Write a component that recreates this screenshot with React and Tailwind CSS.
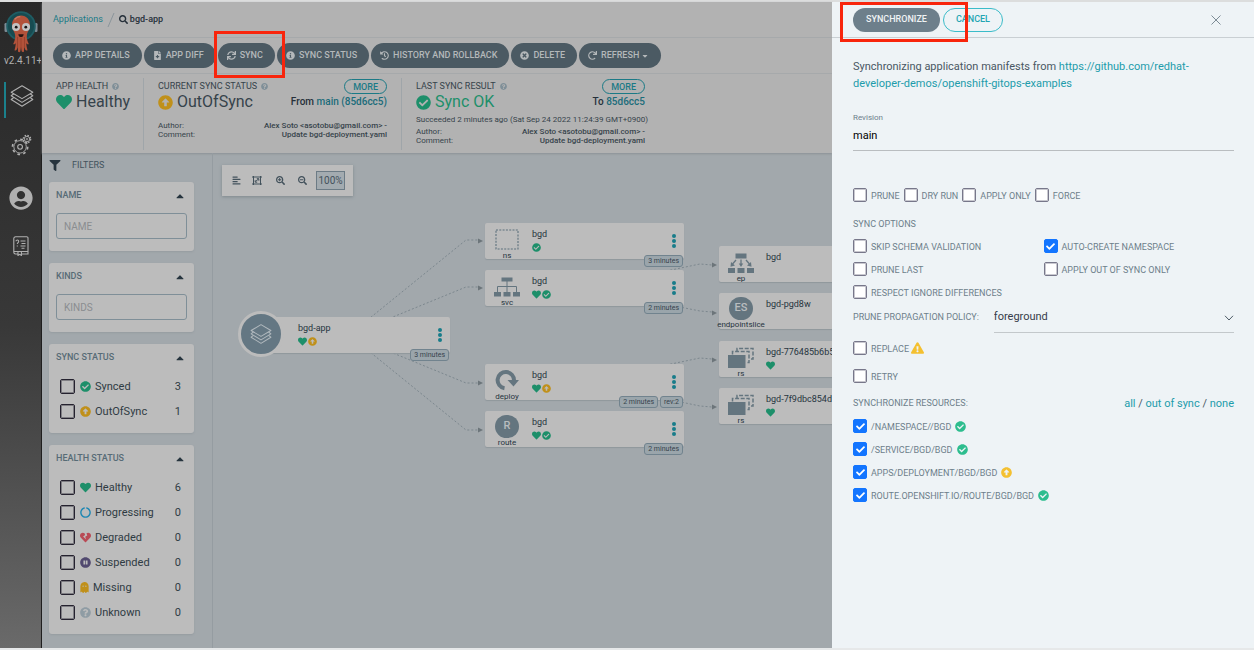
import React from "react";
import {
  FaAlignLeft,
  FaArrowAltCircleUp,
  FaCaretDown,
  FaCaretUp,
  FaCheck,
  FaCheckCircle,
  FaCircleNotch,
  FaExclamationTriangle,
  FaFileMedical,
  FaFilter,
  FaGhost,
  FaHeart,
  FaHeartBroken,
  FaHistory,
  FaInfoCircle,
  FaPauseCircle,
  FaQuestionCircle,
  FaRedo,
  FaSearch,
  FaSearchMinus,
  FaSearchPlus,
  FaSync,
  FaTimesCircle,
  FaUserCircle,
} from "react-icons/fa";

/* ---------- drawings ---------- */

function OctopusLogo() {
  return (
    <svg viewBox="0 0 34 44" className="h-11 w-[34px]" aria-hidden="true">
      <rect x="0.5" y="13" width="3" height="9" rx="1.2" fill="#7d8c96" />
      <rect x="30.5" y="13" width="3" height="9" rx="1.2" fill="#7d8c96" />
      <circle cx="17" cy="16" r="14.8" fill="#1f5d64" />
      <circle cx="17" cy="16" r="13" fill="#174b51" />
      <path
        d="M17 5.5c-5.600 0-9 4.300-9 9.600 0 4.300 2.600 6.600 3.100 9.900.4 3-.2 5.600-1.600 8.300-.6 1.200.6 1.500 1.400.8l.9-.9c-.2 2.300-.6 4.600-1.300 7 .9.600 1.700.3 2.200-.5l1-3 .4 5c1 .8 1.900.5 2.200-.4l.7-4.200.7 4.200c.4.900 1.300 1.100 2.200.4l.4-5 1 3c.5.800 1.300 1.100 2.200.5-.7-2.400-1.100-4.700-1.300-7l.9.9c.8.700 2 .4 1.400-.8-1.400-2.700-2-5.300-1.600-8.300.5-3.300 3.100-5.600 3.100-9.900 0-5.300-3.400-9.600-9-9.600z"
        fill="#b2523a"
      />
      <path d="M13.500 27v10M17 28v11M20.500 27v10" stroke="#943f2b" strokeWidth="0.8" fill="none" />
      <path d="M11 9c1.300-1.600 3-2.300 4.800-2.300" stroke="#c77b68" strokeWidth="1.200" fill="none" strokeLinecap="round" />
      <circle cx="12" cy="17" r="4" fill="#c2c2c2" />
      <circle cx="22" cy="17" r="4" fill="#c2c2c2" />
      <circle cx="12.200" cy="17.200" r="1.400" fill="#1a1414" />
      <circle cx="21.800" cy="17.200" r="1.400" fill="#1a1414" />
      <path d="M14.300 24.200h5.400c-.3 2-1.400 2.900-2.700 2.900s-2.400-.9-2.700-2.900z" fill="#2a1512" />
    </svg>
  );
}

function Layers({ className }) {
  return (
    <svg viewBox="0 0 24 24" className={className} fill="none" stroke="currentColor" strokeWidth="1.100" strokeLinejoin="round" aria-hidden="true">
      <path d="M12 1.800 22.800 8.200 12 14.600 1.200 8.200z" />
      <path d="M3.800 9.800 1.200 11.800 12 18.400l10.800-6.600-2.600-2" />
      <path d="M3.800 13.500 1.200 15.500 12 22.200l10.800-6.700-2.600-2" />
    </svg>
  );
}

function Gears() {
  return (
    <svg viewBox="0 0 24 24" className="h-[22px] w-[22px]" fill="none" stroke="currentColor" aria-hidden="true">
      <circle cx="11" cy="14" r="6.800" strokeWidth="1" />
      <circle cx="11" cy="14" r="8.300" strokeWidth="1.800" strokeDasharray="2.900 3.600" />
      <circle cx="11" cy="14" r="2.600" strokeWidth="1.200" />
      <circle cx="18.500" cy="5.500" r="3" strokeWidth="1" fill="#303030" />
      <circle cx="18.500" cy="5.500" r="4.100" strokeWidth="1.300" strokeDasharray="1.700 1.520" />
      <circle cx="18.500" cy="5.500" r="0.900" strokeWidth="0.800" />
    </svg>
  );
}

function DocsBook() {
  return (
    <svg viewBox="0 0 16 20" className="h-5 w-4" fill="none" stroke="currentColor" strokeWidth="1.100" aria-hidden="true">
      <path d="M5 18H2.500A1.700 1.700 0 0 1 .8 16.300V2.500A1.700 1.700 0 0 1 2.500.8h11.200a1.300 1.300 0 0 1 1.300 1.300V18H8.500" />
      <path d="M1 15.500h14M5 15.500v4l1.700-1.200 1.700 1.200v-4" />
      <path d="M7.500 5h5M8.500 7.500h4M7.500 10h5M8.500 12.200h3" />
      <path d="M3 5.300c0-1.700 2.700-1.600 2.700.1 0 1.200-1.400 1.200-1.400 2.600M4.300 9.500v1" />
    </svg>
  );
}

function Dots({ className }) {
  return (
    <svg viewBox="0 0 4 14" className={className} fill="#187c8a" aria-hidden="true">
      <circle cx="2" cy="2" r="2" />
      <circle cx="2" cy="7" r="2" />
      <circle cx="2" cy="12" r="2" />
    </svg>
  );
}

function KindIcon({ kind }) {
  const c = "h-6 w-[26px] overflow-visible";
  if (kind === "ns")
    return (
      <svg viewBox="0 0 26 24" className={c} aria-hidden="true">
        <rect x="2" y="3" width="22" height="19" fill="none" stroke="#5c707c" strokeWidth="1.100" strokeDasharray="2 1.300" />
      </svg>
    );
  if (kind === "svc")
    return (
      <svg viewBox="0 0 26 24" className={c} fill="#64757f" aria-hidden="true">
        <path d="M7.500 3.500h11v4h-11zM0 18h7v4.500H0zM9.500 18h7v4.500h-7zM19 18h7v4.500h-7z" />
        <path d="M13 7v11M3.500 18v-5.500h19V18" fill="none" stroke="#64757f" />
      </svg>
    );
  if (kind === "ep")
    return (
      <svg viewBox="0 0 26 24" className={c} fill="#64757f" aria-hidden="true">
        <path d="M7.500 3.500h11v5h-11zM0 18h7v5H0zM9.500 18h7v5h-7zM19 18h7v5h-7z" />
        <path d="M13 9.500v5M8 10l-3.500 4M18 10l3.500 4" fill="none" stroke="#64757f" strokeWidth="1.300" />
        <path d="M10.800 13.500h4.400L13 17zM3 12l4 3.500-4.500 1.300zM23 12l-4 3.500 4.500 1.300z" />
      </svg>
    );
  if (kind === "deploy")
    return (
      <svg viewBox="0 0 26 24" className={c} aria-hidden="true">
        <path d="M10.500 20.300A8.200 8.200 0 1 1 20 12.500" fill="none" stroke="#64757f" strokeWidth="4" />
        <path d="M13.500 12H25l-5.500 6.500z" fill="#64757f" />
      </svg>
    );
  if (kind === "rs")
    return (
      <svg viewBox="0 0 26 24" className={c} aria-hidden="true">
        <path d="M9 7V3.500h16V14h-3.500" fill="none" stroke="#64757f" strokeWidth="1.500" strokeDasharray="4 1.600" />
        <path d="M4.500 9.500v-3h16.500v11h-3" fill="none" stroke="#64757f" strokeWidth="1.500" strokeDasharray="4 1.600" />
        <path d="M0 10h17.500v13H0z" fill="#64757f" />
      </svg>
    );
  return (
    <span className="flex h-6 w-6 items-center justify-center rounded-full bg-[#64757f] text-[11px] font-medium text-[#b9bdbf]">
      {kind === "route" ? "R" : "ES"}
    </span>
  );
}

const Heart = ({ className = "" }) => <FaHeart className={`shrink-0 text-[#1d8f6a] ${className}`} />;
const Check = ({ className = "" }) => <FaCheckCircle className={`shrink-0 text-[#1d8f6a] ${className}`} />;
const Up = ({ className = "" }) => <FaArrowAltCircleUp className={`shrink-0 text-[#c0901a] ${className}`} />;

/* ---------- sidebar ---------- */

function Sidebar() {
  return (
    <nav className="flex w-[42px] shrink-0 flex-col items-center border-r border-[#1f1f1f] bg-linear-to-b from-[#282828] via-[#383838] to-[#6a6a6a] pt-2 text-[#b0b0b0]">
      <OctopusLogo />
      <span className="w-full overflow-hidden pl-1 text-[10px] leading-[14px] whitespace-nowrap">v2.4.11+</span>
      <a href="#applications" aria-label="Applications" className="mt-3.5 flex h-9 w-full pl-1">
        <span className="flex flex-1 justify-center border-l-2 border-[#1b818c] pt-0.5 pr-1">
          <Layers className="h-6 w-6" />
        </span>
      </a>
      <a href="#settings" aria-label="Settings" className="mt-4">
        <Gears />
      </a>
      <a href="#user" aria-label="User info" className="mt-[30px]">
        <FaUserCircle className="h-6 w-6" />
      </a>
      <a href="#docs" aria-label="Documentation" className="mt-[26px]">
        <DocsBook />
      </a>
    </nav>
  );
}

/* ---------- header ---------- */

function ToolButton({ icon: Icon, children, caret, outlined }) {
  const button = (
    <button className="flex h-[25px] items-center gap-1 rounded-full bg-[#4b5a63] pr-3 pl-[9px] text-[9px] font-medium whitespace-nowrap text-[#b4b8ba]">
      <Icon className="h-[9px] w-[9px]" />
      <span>{children}</span>
      {caret && <FaCaretDown className="-ml-0.5 h-2 w-2" />}
    </button>
  );
  if (!outlined) return button;
  return (
    <div className="relative z-10">
      {button}
      <span className="pointer-events-none absolute -top-3 -right-2.5 -bottom-2.5 -left-1 border-3 border-[#f8250c]" />
    </div>
  );
}

function StatusTitle({ children, more }) {
  return (
    <div className="flex h-[15px] items-center gap-1 text-[9px] text-[#36434b]">
      <span>{children}</span>
      <FaQuestionCircle className="h-[7px] w-[7px] text-[#7f8f98]" />
      {more && (
        <button className="ml-auto h-[15px] rounded-full border border-[#1b7a86] px-2 text-[9px] leading-3 font-medium text-[#1b7a86]">MORE</button>
      )}
    </div>
  );
}

function Commit() {
  return (
    <dl className="grid grid-cols-[auto_1fr] text-[8px] leading-[9px] text-[#36434b]">
      <dt>Author:</dt>
      <dd className="text-right font-medium">Alex Soto &lt;asotobu@gmail.com&gt; -</dd>
      <dt>Comment:</dt>
      <dd className="text-right font-medium">Update bgd-deployment.yaml</dd>
    </dl>
  );
}

function Header() {
  return (
    <header className="overflow-hidden bg-[#b2b2b2] whitespace-nowrap shadow-[0_1px_2px_#8b9296]">
      <div className="flex h-9 items-center border-b border-[#a6a9ab] pl-[11px] text-[9px]">
        <a href="#applications" className="text-[#1b7a86]">Applications</a>
        <svg viewBox="0 0 8 16" className="mx-1 h-4 w-2" stroke="#8b959b" aria-hidden="true">
          <path d="M7 1 1 15" />
        </svg>
        <FaSearch className="mr-0.5 h-[9px] w-[9px] text-[#26303a]" />
        <span className="font-medium text-[#26303a]">bgd-app</span>
      </div>
      <div className="flex h-9 items-center gap-0.5 border-b border-[#a6a9ab] pl-[11px]">
        <ToolButton icon={FaInfoCircle}>APP DETAILS</ToolButton>
        <ToolButton icon={FaFileMedical}>APP DIFF</ToolButton>
        <ToolButton icon={FaSync} outlined>SYNC</ToolButton>
        <ToolButton icon={FaInfoCircle}>SYNC STATUS</ToolButton>
        <ToolButton icon={FaHistory}>HISTORY AND ROLLBACK</ToolButton>
        <ToolButton icon={FaTimesCircle}>DELETE</ToolButton>
        <ToolButton icon={FaRedo} caret>REFRESH</ToolButton>
      </div>
      <div className="flex pt-1 pb-[3px]">
        <section className="w-[102px] shrink-0 border-r border-[#9fa5a9] pt-px pl-3.5">
          <StatusTitle>APP HEALTH</StatusTitle>
          <div className="flex h-4 items-center gap-1 text-[16px] leading-4 text-[#36434b]">
            <Heart className="h-4 w-4" />
            Healthy
          </div>
        </section>
        <section className="w-[258px] shrink-0 border-r border-[#9fa5a9] px-3.5 pt-px">
          <StatusTitle more>CURRENT SYNC STATUS</StatusTitle>
          <div className="flex h-4 items-center gap-1 text-[16px] leading-4 text-[#36434b]">
            <Up className="h-[15px] w-[15px]" />
            OutOfSync
            <span className="ml-auto text-[10px] font-medium text-[#26303a]">
              From <a href="#rev" className="text-[#1b6c7a]">main (85d6cc5)</a>
            </span>
          </div>
          <div className="pt-[11px]">
            <Commit />
          </div>
        </section>
        <section className="h-[72px] w-[257px] shrink-0 px-3.5 pt-px">
          <StatusTitle more>LAST SYNC RESULT</StatusTitle>
          <div className="flex h-4 items-center gap-1 text-[16px] leading-4 text-[#1d8f6a]">
            <Check className="h-[15px] w-[15px]" />
            Sync OK
            <span className="ml-auto text-[10px] font-medium text-[#26303a]">
              To <a href="#rev" className="text-[#1b6c7a]">85d6cc5</a>
            </span>
          </div>
          <p className="pt-1 pb-px text-[8px] leading-3 text-[#36434b]">Succeeded 2 minutes ago (Sat Sep 24 2022 11:24:39 GMT+0900)</p>
          <Commit />
        </section>
      </div>
    </header>
  );
}

/* ---------- filters ---------- */

function FilterCard({ title, children }) {
  return (
    <section className="rounded-[3px] bg-[#bcbcbc] px-[7px] pt-1.5 pb-[9px] shadow-[0_1px_2px_#959ca0]">
      <h3 className="flex h-4 items-center justify-between text-[9px] font-medium text-[#576b76]">
        {title}
        <FaCaretUp className="mr-px h-3 w-3 text-[#26343e]" />
      </h3>
      {children}
    </section>
  );
}

function FilterInput({ label }) {
  return (
    <div className="pt-[9px] pb-[3px]">
      <input
        aria-label={label}
        placeholder={label}
        className="block h-[26px] w-full rounded-[3px] border border-[#7f8f98] bg-transparent px-[7px] text-[10px] placeholder:text-[#8a8d90] outline-none"
      />
    </div>
  );
}

function FilterRow({ icon, label, count }) {
  return (
    <label className="flex h-[25px] items-center pr-1.5 pl-1 text-[11px] leading-[17px] text-[#2f3b43]">
      <input type="checkbox" className="mr-[5px] h-[15px] w-[15px] appearance-none rounded-xs border border-[#25222f] outline-1 -outline-offset-2 outline-[#25222f]/40" />
      {icon}
      <span className="ml-1">{label}</span>
      <span className="ml-auto">{count}</span>
    </label>
  );
}

function Filters() {
  return (
    <aside className="w-[171px] shrink-0 border-r border-[#959ca1] pr-[18px] pl-[7px]">
      <div className="flex h-[29px] items-center gap-[11px] pb-1 text-[9px] text-[#43535d]">
        <FaFilter className="h-[11px] w-3 text-[#26343e]" />
        FILTERS
      </div>
      <div className="flex flex-col gap-3">
        <FilterCard title="NAME">
          <FilterInput label="NAME" />
        </FilterCard>
        <FilterCard title="KINDS">
          <FilterInput label="KINDS" />
        </FilterCard>
        <FilterCard title="SYNC STATUS">
          <div className="pt-2">
            <FilterRow icon={<Check className="h-[11px] w-[11px]" />} label="Synced" count="3" />
            <FilterRow icon={<Up className="h-[11px] w-[11px]" />} label="OutOfSync" count="1" />
          </div>
        </FilterCard>
        <FilterCard title="HEALTH STATUS">
          <div className="pt-2">
            <FilterRow icon={<Heart className="h-[11px] w-[11px]" />} label="Healthy" count="6" />
            <FilterRow icon={<FaCircleNotch className="h-[11px] w-[11px] text-[#1c86b3]" />} label="Progressing" count="0" />
            <FilterRow icon={<FaHeartBroken className="h-[11px] w-[11px] text-[#b94a55]" />} label="Degraded" count="0" />
            <FilterRow icon={<FaPauseCircle className="h-[11px] w-[11px] text-[#51496f]" />} label="Suspended" count="0" />
            <FilterRow icon={<FaGhost className="h-[11px] w-[9px] text-[#c0901a]" />} label="Missing" count="0" />
            <FilterRow icon={<FaQuestionCircle className="h-[11px] w-[11px] text-[#8f9ca4]" />} label="Unknown" count="0" />
          </div>
        </FilterCard>
      </div>
    </aside>
  );
}

/* ---------- resource tree ---------- */

const NODES = [
  { pos: "left-[272px] top-[70px]", kind: "ns", name: "bgd", status: ["check"], tags: ["3 minutes"] },
  { pos: "left-[272px] top-[117px]", kind: "svc", name: "bgd", status: ["heart", "check"], tags: ["2 minutes"] },
  { pos: "left-[272px] top-[211px]", kind: "deploy", name: "bgd", status: ["heart", "up"], tags: ["2 minutes", "rev:2"] },
  { pos: "left-[272px] top-[258px]", kind: "route", name: "bgd", status: ["heart", "check"], tags: ["2 minutes"] },
  { pos: "left-[506px] top-[93px]", kind: "ep", name: "bgd", status: [], tags: [] },
  { pos: "left-[506px] top-[140px]", kind: "endpointslice", name: "bgd-pgd8w", status: [], tags: [] },
  { pos: "left-[506px] top-[188px]", kind: "rs", name: "bgd-776485b6b5", status: ["heart"], tags: [] },
  { pos: "left-[506px] top-[235px]", kind: "rs", name: "bgd-7f9dbc854d", status: ["heart"], tags: [] },
];

const EDGES = [
  "M136 182 253 87h12",
  "M136 182 253 134h12",
  "M136 182 253 230h12",
  "M136 182 253 277h12",
  "M371 135 487 111l12 1",
  "M371 135 487 158l12 1",
  "M371 229 487 205l12 1",
  "M371 229 487 253l12 1",
];

const ARROWS = [
  [265, 88],
  [265, 135],
  [265, 230],
  [265, 277],
  [499, 112],
  [499, 160],
  [499, 207],
  [499, 254],
];

function StatusIcons({ status }) {
  return (
    <div className="flex h-[11px] items-center gap-px">
      {status.map((s) =>
        s === "heart" ? <Heart key={s} className="h-[9px] w-[9px]" /> : s === "check" ? <Check key={s} className="h-[9px] w-[9px]" /> : <Up key={s} className="h-[9px] w-[9px]" />
      )}
    </div>
  );
}

function Tags({ tags }) {
  return (
    <div className="absolute right-px -bottom-2 flex gap-0.5">
      {tags.map((t) => (
        <span key={t} className="h-3 rounded-[3px] border border-[#71838e] bg-[#9aa5ab] px-[3px] text-[7px] leading-[10px] text-[#36434b]">
          {t}
        </span>
      ))}
    </div>
  );
}

function Node({ node }) {
  return (
    <article className={`absolute flex h-9 w-[199px] rounded-xs bg-[#bcbcbc] shadow-[0_1px_1px_#8f979c] ${node.pos}`}>
      <div className="flex w-11 shrink-0 flex-col items-center pt-1">
        <KindIcon kind={node.kind} />
        <span className="text-[8px] leading-[9px] text-[#26343e]">{node.kind}</span>
      </div>
      <div className="pt-1 pl-[3px]">
        <div className="text-[9px] leading-[15px] text-[#26343e]">{node.name}</div>
        <StatusIcons status={node.status} />
      </div>
      <button aria-label="Resource actions" className="mr-2 ml-auto self-center">
        <Dots className="h-3.5 w-1" />
      </button>
      <Tags tags={node.tags} />
    </article>
  );
}

function Tree() {
  return (
    <div className="relative min-w-0 flex-1 overflow-hidden">
      <svg className="absolute top-0 left-0 h-[400px] w-[620px]" aria-hidden="true">
        {EDGES.map((d) => (
          <path key={d} d={d} fill="none" stroke="#7c878e" strokeDasharray="2 2" />
        ))}
        {ARROWS.map(([x, y]) => (
          <path key={`${x}-${y}`} d={`M${x} ${y - 2.5}l5 2.500-5 2.500z`} fill="#6c757a" />
        ))}
      </svg>
      <div className="absolute top-3 left-[9px] flex h-[31px] items-center bg-[#bcbcbc] pr-2 pl-2.5 text-[#43525c] shadow-[0_1px_3px_#7f888d]">
        <button aria-label="Align" className="w-6">
          <FaAlignLeft className="h-[9px] w-[9px]" />
        </button>
        <button aria-label="Fit to screen" className="-ml-1 w-6">
          <svg viewBox="0 0 10 9" className="h-[9px] w-2.5" fill="none" stroke="currentColor" aria-hidden="true">
            <path d="M1.500 0v9M8.500 0v9M0 1h10M0 8h10" />
            <path d="M3.500 5.500 6.500 3M4.800 2.700h2v2M3.200 4.200v2h2" />
          </svg>
        </button>
        <button aria-label="Zoom in" className="w-[22px]">
          <FaSearchPlus className="h-[9px] w-[9px]" />
        </button>
        <button aria-label="Zoom out" className="w-[18px]">
          <FaSearchMinus className="h-[9px] w-[9px]" />
        </button>
        <span className="flex h-[19px] w-[29px] items-center justify-center border border-[#6c7b85] bg-[#a3abb0] text-[10px]">100%</span>
      </div>
      <article className="absolute top-[164px] left-[53px] flex h-9 w-[184px] rounded-xs bg-[#bcbcbc] shadow-[0_1px_1px_#8f979c]">
        <div className="absolute -top-[6px] -left-7 flex h-[46px] w-[46px] items-center justify-center rounded-full border-3 border-[#bcbcbc] bg-[#647783] text-[#b0b8bd]">
          <Layers className="h-[22px] w-[22px]" />
        </div>
        <div className="pt-1 pl-8">
          <div className="text-[9px] leading-[15px] text-[#26343e]">bgd-app</div>
          <StatusIcons status={["heart", "up"]} />
        </div>
        <button aria-label="Application actions" className="mr-2 ml-auto self-center">
          <Dots className="h-3.5 w-1" />
        </button>
        <Tags tags={["3 minutes"]} />
      </article>
      {NODES.map((n) => (
        <Node key={n.pos} node={n} />
      ))}
    </div>
  );
}

/* ---------- sync panel ---------- */

function Option({ label, checked, icon }) {
  return (
    <label className="flex h-4 items-center gap-1 text-[9px] leading-[14px] whitespace-nowrap text-[#6d7f8b]">
      <span className="grid h-3.5 w-3.5 place-items-center">
        <input
          type="checkbox"
          defaultChecked={checked}
          className="peer col-start-1 row-start-1 h-3.5 w-3.5 appearance-none rounded-xs border border-[#77778a] bg-white outline-1 -outline-offset-2 outline-[#77778a]/40 checked:border-[#1375ff] checked:bg-[#1375ff] checked:outline-[#1375ff]"
        />
        <FaCheck className="pointer-events-none z-10 col-start-1 row-start-1 hidden h-[9px] w-[9px] text-white peer-checked:block" />
      </span>
      <span className="pt-px">{label}</span>
      {icon}
    </label>
  );
}

const okIcon = <FaCheckCircle className="h-[11px] w-[11px] text-[#2dbd8e]" />;
const outIcon = <FaArrowAltCircleUp className="h-[11px] w-[11px] text-[#f4c030]" />;

function SyncPanel() {
  return (
    <aside className="w-[422px] shrink-0 bg-[#eef3f6]">
      <div className="relative flex h-9 items-center gap-[3px] border-b border-[#c9cfd3] pr-8 pl-[21px] text-[9px] font-medium">
        <button className="h-6 rounded-full bg-[#6d7f8b] px-[13px] text-[#f0f3f5]">SYNCHRONIZE</button>
        <button className="h-6 rounded-full border border-[#3bbcc9] px-3 text-[#22a5b3]">CANCEL</button>
        <button aria-label="Close" className="ml-auto">
          <svg viewBox="0 0 12 12" className="h-3 w-3" stroke="#7d8c96" aria-hidden="true">
            <path d="M1.500 1.500l9 9M10.500 1.500l-9 9" />
          </svg>
        </button>
        <span className="pointer-events-none absolute top-0 left-2 h-10 w-32 border-3 border-[#f8250c]" />
      </div>
      <form className="pr-5 pb-5 pl-[21px] pt-5" onSubmit={(e) => e.preventDefault()}>
        <p className="text-[11px] leading-[17px] text-[#495763]">
          Synchronizing application manifests from{" "}
          <a href="https://github.com/redhat-developer-demos/openshift-gitops-examples" className="text-[#1d9cab]">
            https://github.com/redhat-developer-demos/openshift-gitops-examples
          </a>
        </p>
        <label htmlFor="revision" className="mt-5 block text-[8px] leading-3 text-[#6d7f8b]">
          Revision
        </label>
        <input id="revision" defaultValue="main" className="block h-[27px] w-full border-b border-[#b9bdc0] bg-transparent pb-[3px] text-[11px] text-black outline-none" />
        <div className="mt-9 flex gap-1">
          <Option label="PRUNE" />
          <Option label="DRY RUN" />
          <Option label="APPLY ONLY" />
          <Option label="FORCE" />
        </div>
        <h4 className="mt-[15px] text-[9px] leading-3 text-[#6d7f8b]">SYNC OPTIONS</h4>
        <div className="mt-2 grid grid-cols-2 gap-y-[7px]">
          <Option label="SKIP SCHEMA VALIDATION" />
          <Option label="AUTO-CREATE NAMESPACE" checked />
          <Option label="PRUNE LAST" />
          <Option label="APPLY OUT OF SYNC ONLY" />
          <Option label="RESPECT IGNORE DIFFERENCES" />
        </div>
        <div className="mt-[3px] flex h-[30px] items-center gap-[15px] text-[9px] whitespace-nowrap text-[#6d7f8b]">
          <label htmlFor="policy">PRUNE PROPAGATION POLICY:</label>
          <div className="grid h-full flex-1 items-center border-b border-[#c3c8cb]">
            <select id="policy" className="col-start-1 row-start-1 w-full appearance-none bg-transparent text-[11px] text-[#363c4a] outline-none">
              <option>foreground</option>
              <option>background</option>
              <option>orphan</option>
            </select>
            <svg viewBox="0 0 10 6" className="pointer-events-none col-start-1 row-start-1 h-1.5 w-2.5 justify-self-end" fill="none" stroke="#4d5b66" aria-hidden="true">
              <path d="M1 .8 5 5 9 .8" />
            </svg>
          </div>
        </div>
        <div className="mt-[7px] flex flex-col gap-3">
          <Option label="REPLACE" icon={<FaExclamationTriangle className="-ml-0.5 h-3 w-[13px] text-[#f4c030]" />} />
          <Option label="RETRY" />
        </div>
        <div className="mt-3 flex items-center justify-between">
          <h4 className="text-[9px] text-[#6d7f8b]">SYNCHRONIZE RESOURCES:</h4>
          <span className="text-[11px] leading-4 text-[#495763]">
            <a href="#all" className="text-[#1d9cab]">all</a> / <a href="#out" className="text-[#1d9cab]">out of sync</a> /{" "}
            <a href="#none" className="text-[#1d9cab]">none</a>
          </span>
        </div>
        <div className="mt-1.5 flex flex-col gap-[7px]">
          <Option label="/NAMESPACE//BGD" checked icon={okIcon} />
          <Option label="/SERVICE/BGD/BGD" checked icon={okIcon} />
          <Option label="APPS/DEPLOYMENT/BGD/BGD" checked icon={outIcon} />
          <Option label="ROUTE.OPENSHIFT.IO/ROUTE/BGD/BGD" checked icon={okIcon} />
        </div>
      </form>
    </aside>
  );
}

export default function App() {
  return (
    <div className="flex min-h-screen flex-col border-t-2 border-b-2 border-t-[#dcdddd] border-b-[#e6e8e9] font-[Roboto,'Liberation_Sans',sans-serif]">
      <div className="flex flex-1">
        <Sidebar />
        <main className="flex min-w-0 flex-1 flex-col bg-[#a2a8ac]">
          <Header />
          <div className="flex flex-1">
            <Filters />
            <Tree />
          </div>
        </main>
        <SyncPanel />
      </div>
    </div>
  );
}
